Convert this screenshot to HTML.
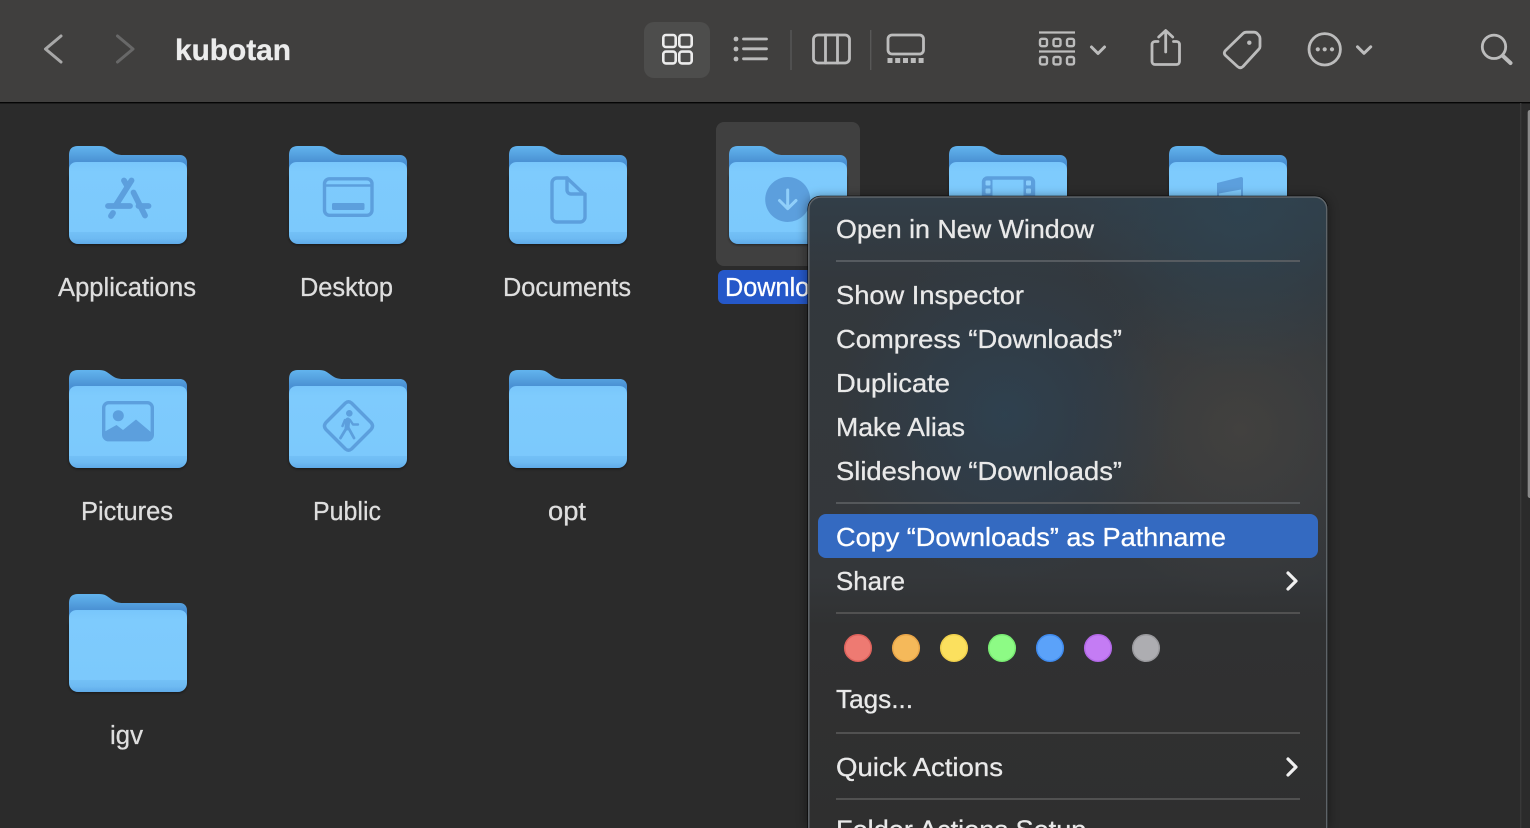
<!DOCTYPE html>
<html lang="en">
<head>
<meta charset="utf-8">
<title>kubotan</title>
<style>
html,body{margin:0;padding:0;width:1530px;height:828px;overflow:hidden;background:#2b2b2b}
svg{display:block}
text{font-family:"Liberation Sans",sans-serif}
.l{font-size:25.5px;fill:#dedede;stroke:#dedede;stroke-width:.3px}
.m{font-size:26px;fill:#e9e9e9;stroke:#e9e9e9;stroke-width:.3px}
.i{fill:none;stroke:#bcbcbc;stroke-width:2.8;stroke-linecap:round;stroke-linejoin:round}
.s{fill:none;stroke:#5c9fdd;stroke-width:3.4;stroke-linecap:round;stroke-linejoin:round}
.f{fill:#5c9fdd}
</style>
</head>
<body>
<svg width="1530" height="828" viewBox="0 0 1530 828" xmlns="http://www.w3.org/2000/svg">
<defs>
<linearGradient id="bk" x1="0" y1="0" x2="0" y2="1"><stop offset="0" stop-color="#62b4ee"/><stop offset=".4" stop-color="#4a91d3"/><stop offset="1" stop-color="#4a91d3"/></linearGradient>
<linearGradient id="fr" x1="0" y1="0" x2="0" y2="1"><stop offset="0" stop-color="#78c6fb"/><stop offset=".12" stop-color="#7ecbfd"/><stop offset=".85" stop-color="#7cc9fc"/><stop offset=".855" stop-color="#73c0f6"/><stop offset=".93" stop-color="#6ebbf3"/><stop offset="1" stop-color="#5faae8"/></linearGradient>
<filter id="fs" x="-5%" y="-5%" width="110%" height="110%"><feGaussianBlur stdDeviation="1.200"/></filter>
<symbol id="folder" viewBox="0 0 118 98" width="118" height="98" overflow="visible">
<path d="M0 30H118V90C118 95 114 99 109 99H9C4 99 0 95 0 90Z" fill="#000" opacity=".45" filter="url(#fs)"/>
<path d="M0 9C0 3 3 0 9 0H30C36 0 38 2 42 5C46 8 49 9 54 9H111C115 9 118 12 118 16V40H0Z" fill="url(#bk)"/>
<path d="M0 24C0 19 3 16 8 16H110C115 16 118 19 118 24V89C118 94 114 98 109 98H9C4 98 0 94 0 89Z" fill="url(#fr)"/>
</symbol>
<linearGradient id="mb" x1="0" y1="0" x2="0" y2="1"><stop offset="0" stop-color="#323e48"/><stop offset=".13" stop-color="#33383d"/><stop offset=".6" stop-color="#34373a"/><stop offset=".68" stop-color="#303132"/><stop offset="1" stop-color="#2f2f2f"/></linearGradient>
<radialGradient id="mblue" gradientUnits="userSpaceOnUse" cx="1005" cy="415" r="170"><stop offset="0" stop-color="#2e4251" stop-opacity=".9"/><stop offset=".5" stop-color="#2e4050" stop-opacity=".5"/><stop offset="1" stop-color="#2e4050" stop-opacity="0"/></radialGradient>
<radialGradient id="mtop" gradientUnits="userSpaceOnUse" cx="1240" cy="205" r="170"><stop offset="0" stop-color="#2f4350" stop-opacity="1"/><stop offset="1" stop-color="#2f4350" stop-opacity="0"/></radialGradient>
<radialGradient id="mwarm" gradientUnits="userSpaceOnUse" cx="1240" cy="430" r="170"><stop offset="0" stop-color="#42413f" stop-opacity="1"/><stop offset="1" stop-color="#42413f" stop-opacity="0"/></radialGradient>
<filter id="sh" x="-10%" y="-10%" width="120%" height="120%"><feGaussianBlur stdDeviation="5"/></filter>
</defs>

<!-- background -->
<rect width="1530" height="828" fill="#2b2b2b"/>
<!-- toolbar -->
<rect width="1530" height="102" fill="#403f3e"/>
<rect y="102" width="1530" height="1.4" fill="#050505"/>

<!-- scrollbar -->
<rect x="1520" y="103" width="1.4" height="725" fill="#393939"/>
<path d="M1530 110V498A2.300 2.300 0 0 1 1527.700 495.700V112.300A2.300 2.300 0 0 1 1530 110Z" fill="#8a8a8a"/>

<!-- nav -->
<path d="M61 36L45.500 49L61 62" fill="none" stroke="#a8a8a8" stroke-width="3" stroke-linecap="round" stroke-linejoin="round"/>
<path d="M117.500 36L133 49L117.500 62" fill="none" stroke="#686868" stroke-width="3" stroke-linecap="round" stroke-linejoin="round"/>
<text x="175" y="60" font-size="30" font-weight="700" fill="#ececec" stroke="#ececec" stroke-width=".3" textLength="116" lengthAdjust="spacingAndGlyphs">kubotan</text>

<!-- view buttons -->
<rect x="644" y="22" width="66" height="56" rx="10" fill="#4d4d4c"/>
<g fill="none" stroke="#ececec" stroke-width="2.600">
<rect x="663.300" y="35" width="12.400" height="12" rx="2.600"/><rect x="679.300" y="35" width="12.400" height="12" rx="2.600"/>
<rect x="663.300" y="51.600" width="12.400" height="11.800" rx="2.600"/><rect x="679.300" y="51.600" width="12.400" height="11.800" rx="2.600"/>
</g>
<g fill="#bcbcbc"><circle cx="736" cy="39" r="2.400"/><circle cx="736" cy="49" r="2.400"/><circle cx="736" cy="59" r="2.400"/></g>
<path d="M743.500 39H766.500M743.500 48.800H766.500M743.500 58.800H766.500" class="i"/>
<rect x="790.300" y="30" width="1.400" height="40" fill="#585857"/>
<rect x="813.500" y="35" width="36" height="28" rx="4.500" class="i"/>
<path d="M825.500 35V63M837.500 35V63" class="i"/>
<rect x="870" y="30" width="1.400" height="40" fill="#585857"/>
<rect x="888" y="35" width="35.500" height="19" rx="4" class="i"/>
<g fill="#bcbcbc"><rect x="887.500" y="58" width="5" height="5"/><rect x="895.200" y="58" width="5" height="5"/><rect x="903" y="58" width="5" height="5"/><rect x="910.800" y="58" width="5" height="5"/><rect x="918.600" y="58" width="5" height="5"/></g>

<!-- group -->
<path d="M1039 32.500H1075M1039 51.500H1075" fill="none" stroke="#bcbcbc" stroke-width="2.200"/>
<g fill="none" stroke="#bcbcbc" stroke-width="2.400">
<rect x="1040" y="38.800" width="7" height="7.400" rx="1.800"/><rect x="1053.500" y="38.800" width="7" height="7.400" rx="1.800"/><rect x="1067" y="38.800" width="7" height="7.400" rx="1.800"/>
<rect x="1040" y="57" width="7" height="7.400" rx="1.800"/><rect x="1053.500" y="57" width="7" height="7.400" rx="1.800"/><rect x="1067" y="57" width="7" height="7.400" rx="1.800"/>
</g>
<path d="M1091.500 47L1098 53.500L1104.500 47" class="i" style="stroke-width:3"/>

<!-- share -->
<path d="M1158 41.500H1155A3 3 0 0 0 1152 44.500V61.500A3 3 0 0 0 1155 64.500H1176.500A3 3 0 0 0 1179.500 61.500V44.500A3 3 0 0 0 1176.500 41.500H1173.500M1165.700 52V31M1158.700 37L1165.700 30.500L1172.700 37" class="i"/>

<!-- tag -->
<path d="M1225.500 50.500L1243 33.500Q1244.500 32.200 1246.500 32.200H1254Q1256 32.200 1257.500 33.800L1259 35.500Q1260 36.800 1260 38.500V46.500Q1260 48 1259 49L1243 66.500Q1240.300 69 1237.500 66.500L1225.500 55.500Q1223 53 1225.500 50.500Z" class="i"/>
<circle cx="1249.300" cy="42.700" r="2.200" fill="#bcbcbc"/>

<!-- more -->
<circle cx="1324.700" cy="49.300" r="15.700" class="i"/>
<g fill="#bcbcbc"><circle cx="1317.800" cy="49.300" r="2.100"/><circle cx="1324.700" cy="49.300" r="2.100"/><circle cx="1332" cy="49.300" r="2.100"/></g>
<path d="M1357.500 46.800L1364 53.300L1370.700 46.800" class="i" style="stroke-width:3"/>

<!-- search -->
<circle cx="1494" cy="46.800" r="11.700" class="i" style="stroke-width:2.800"/>
<path d="M1503 56L1510.500 63" class="i" style="stroke-width:4"/>

<!-- selection -->
<rect x="716" y="122" width="144" height="144" rx="8" fill="#404040"/>
<rect x="718" y="270" width="138" height="34" rx="6" fill="#2558c9"/>

<!-- folders -->
<use href="#folder" x="69" y="146"/>
<use href="#folder" x="289" y="146"/>
<use href="#folder" x="509" y="146"/>
<use href="#folder" x="729" y="146"/>
<use href="#folder" x="949" y="146"/>
<use href="#folder" x="1169" y="146"/>
<use href="#folder" x="69" y="370"/>
<use href="#folder" x="289" y="370"/>
<use href="#folder" x="509" y="370"/>
<use href="#folder" x="69" y="594"/>

<!-- applications glyph -->
<g fill="none" stroke="#5c9fdd" stroke-width="5.800" stroke-linecap="round">
<path d="M108 206H130M138.500 206H148.500"/>
<path d="M131.500 180.500L116 205"/>
<path d="M124 180.500L127.500 186.500"/>
<path d="M133.500 192.500L145 215.500"/>
<path d="M113 213L111 216"/>
</g>
<!-- desktop glyph -->
<rect x="324.500" y="178.800" width="47.500" height="36.500" rx="5" class="s"/>
<path d="M324.500 185.500H372" class="s" style="stroke-width:2.600"/>
<rect x="332" y="203" width="32.500" height="7" rx="1.500" class="f"/>
<!-- documents glyph -->
<path d="M567 178H557A5 5 0 0 0 552 183V217A5 5 0 0 0 557 222H580A5 5 0 0 0 585 217V195Z" class="s"/>
<path d="M567 178V190A4 4 0 0 0 571 194H585" class="s"/>
<!-- downloads glyph -->
<circle cx="787.700" cy="199.500" r="22.500" class="f"/>
<path d="M787.700 190V208.500M779.500 200.500L787.700 208.700L796 200.500" fill="none" stroke="#90cffa" stroke-width="3" stroke-linecap="round" stroke-linejoin="round"/>
<!-- movies glyph -->
<rect x="983.500" y="178" width="50" height="40" rx="4" class="s"/>
<rect x="983" y="178" width="9.500" height="40" class="f"/>
<rect x="1023.500" y="178" width="9.500" height="40" class="f"/>
<g fill="#8acdfb"><rect x="985.500" y="180.500" width="5" height="5" rx="1"/><rect x="985.500" y="188.500" width="5" height="5" rx="1"/><rect x="1026" y="180.500" width="5" height="5" rx="1"/><rect x="1026" y="188.500" width="5" height="5" rx="1"/></g>
<!-- music glyph -->
<path d="M1217 183L1241 177Q1243 177 1243 179V215H1217Z" class="f"/>
<path d="M1219 193.500L1241 189.500V215H1219Z" fill="#7fcbfd"/>
<!-- pictures glyph -->
<rect x="103.700" y="402.700" width="48.600" height="37" rx="5" class="s"/>
<path d="M104 432L116.500 425L123 430L136 419.500L152 433V437Q152 441 148 441H108Q104 441 104 437Z" class="f"/>
<circle cx="118.300" cy="415.700" r="5.500" class="f"/>
<!-- public glyph -->
<path d="M345.500 403Q348.500 400.500 351.500 403L371 422.500Q374 426 371 429.500L351.500 449Q348.500 451.500 345.500 449L326 429.500Q323 426 326 422.500Z" class="s"/>
<circle cx="349.300" cy="413.300" r="3.300" class="f"/>
<path d="M347.800 420L347 428" fill="none" stroke="#5c9fdd" stroke-width="5" stroke-linecap="round"/>
<path d="M345 420L342.500 426" fill="none" stroke="#5c9fdd" stroke-width="2.500" stroke-linecap="round"/>
<path d="M350 420L353 424.500H358" fill="none" stroke="#5c9fdd" stroke-width="2.400" stroke-linecap="round" stroke-linejoin="round"/>
<path d="M346.500 428L340.500 438M348.500 428L354 438" fill="none" stroke="#5c9fdd" stroke-width="2.800" stroke-linecap="round"/>

<!-- labels -->
<text class="l" x="58" y="296" textLength="138" lengthAdjust="spacingAndGlyphs">Applications</text>
<text class="l" x="300" y="296" textLength="93" lengthAdjust="spacingAndGlyphs">Desktop</text>
<text class="l" x="503" y="296" textLength="128" lengthAdjust="spacingAndGlyphs">Documents</text>
<text class="l" x="725" y="296" textLength="125" lengthAdjust="spacingAndGlyphs" style="fill:#fff;stroke:#fff">Downloads</text>
<text class="l" x="81" y="520" textLength="92" lengthAdjust="spacingAndGlyphs">Pictures</text>
<text class="l" x="313" y="520" textLength="68" lengthAdjust="spacingAndGlyphs">Public</text>
<text class="l" x="548" y="520" textLength="38" lengthAdjust="spacingAndGlyphs">opt</text>
<text class="l" x="110" y="744" textLength="33" lengthAdjust="spacingAndGlyphs">igv</text>

<!-- menu -->
<path d="M806 828V209A13 13 0 0 1 819 196H1316A13 13 0 0 1 1329 209V828Z" fill="#000" opacity=".35" filter="url(#sh)"/>
<path d="M807.500 828V208.700A13 13 0 0 1 820.500 195.700H1315A13 13 0 0 1 1328 208.700V828Z" fill="#000"/>
<path d="M808.800 828V209A12 12 0 0 1 820.800 197H1314.800A12 12 0 0 1 1326.800 209V828Z" fill="url(#mb)"/>
<path d="M809 828V209A12 12 0 0 1 821 197H1314.600A12 12 0 0 1 1326.600 209V828Z" fill="url(#mwarm)"/>
<path d="M809 828V209A12 12 0 0 1 821 197H1314.600A12 12 0 0 1 1326.600 209V828Z" fill="url(#mtop)"/>
<path d="M809 828V209A12 12 0 0 1 821 197H1314.600A12 12 0 0 1 1326.600 209V828Z" fill="url(#mblue)"/>
<path d="M808.800 828V209A12 12 0 0 1 820.800 197H1314.800A12 12 0 0 1 1326.800 209V828" fill="none" stroke="#60666b" stroke-width="1.500"/>

<text class="m" x="836" y="238" textLength="258" lengthAdjust="spacingAndGlyphs">Open in New Window</text>
<rect x="836" y="260" width="464" height="2" fill="#565b60"/>
<text class="m" x="836" y="304" textLength="188" lengthAdjust="spacingAndGlyphs">Show Inspector</text>
<text class="m" x="836" y="348" textLength="286" lengthAdjust="spacingAndGlyphs">Compress “Downloads”</text>
<text class="m" x="836" y="392" textLength="114" lengthAdjust="spacingAndGlyphs">Duplicate</text>
<text class="m" x="836" y="436" textLength="129" lengthAdjust="spacingAndGlyphs">Make Alias</text>
<text class="m" x="836" y="480" textLength="286" lengthAdjust="spacingAndGlyphs">Slideshow “Downloads”</text>
<rect x="836" y="502" width="464" height="2" fill="#55585b"/>
<rect x="818" y="514" width="500" height="44" rx="8" fill="#346ac1"/>
<text class="m" x="836" y="546" textLength="390" lengthAdjust="spacingAndGlyphs" style="fill:#fff;stroke:#fff">Copy “Downloads” as Pathname</text>
<text class="m" x="836" y="590" textLength="69" lengthAdjust="spacingAndGlyphs">Share</text>
<path d="M1288 573L1296 581L1288 589" fill="none" stroke="#f0f0f0" stroke-width="3.200" stroke-linecap="round" stroke-linejoin="round"/>
<rect x="836" y="612" width="464" height="2" fill="#515151"/>
<g stroke-width="1.500">
<circle cx="858" cy="648" r="13.300" fill="#ee7a72" stroke="#dd625c"/>
<circle cx="906" cy="648" r="13.300" fill="#f5b95a" stroke="#e8a548"/>
<circle cx="954" cy="648" r="13.300" fill="#fbe05e" stroke="#efd04c"/>
<circle cx="1002" cy="648" r="13.300" fill="#8dfb85" stroke="#78ea72"/>
<circle cx="1050" cy="648" r="13.300" fill="#5ba2f9" stroke="#3f8bef"/>
<circle cx="1098" cy="648" r="13.300" fill="#c47cf4" stroke="#b268e6"/>
<circle cx="1146" cy="648" r="13.300" fill="#adadb1" stroke="#98989c"/>
</g>
<text class="m" x="836" y="708" textLength="77" lengthAdjust="spacingAndGlyphs">Tags...</text>
<rect x="836" y="732" width="464" height="2" fill="#515151"/>
<text class="m" x="836" y="776" textLength="167" lengthAdjust="spacingAndGlyphs">Quick Actions</text>
<path d="M1288 759L1296 767L1288 775" fill="none" stroke="#f0f0f0" stroke-width="3.200" stroke-linecap="round" stroke-linejoin="round"/>
<rect x="836" y="798" width="464" height="2" fill="#515151"/>
<text class="m" x="836" y="838.500" textLength="273" lengthAdjust="spacingAndGlyphs">Folder Actions Setup...</text>
</svg>
</body>
</html>
